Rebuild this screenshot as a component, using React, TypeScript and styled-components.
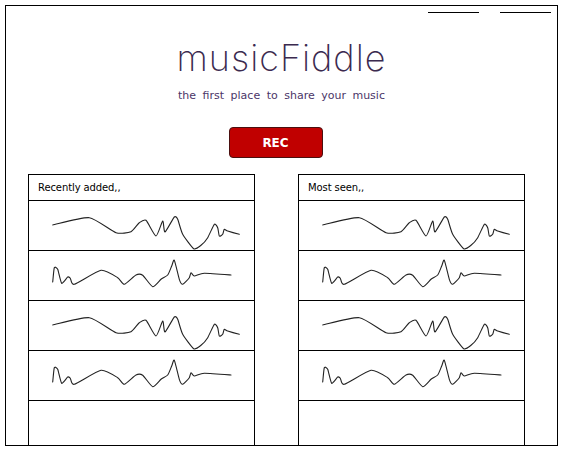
import React from "react";
import styled, { createGlobalStyle } from "styled-components";

const Global = createGlobalStyle`
  html, body { margin: 0; padding: 0; background: #fff; }
  body { font-family: "DejaVu Sans", "Noto Sans CJK KR", sans-serif; }
`;

const Frame = styled.div`
  box-sizing: border-box;
  margin: 5px 0 0 5px;
  width: 553px;
  height: 441px;
  border: 1px solid #000;
  display: flex;
  flex-direction: column;
  overflow: hidden;
`;

const Nav = styled.nav`
  display: flex;
  justify-content: flex-end;
  gap: 21px;
  padding: 6px 6px 0 0;
`;

const NavLink = styled.a`
  display: block;
  width: 51px;
  height: 0;
  border-bottom: 1px solid #000;
`;

const Title = styled.h1`
  margin: 25px 0 0 0;
  text-align: center;
  font-family: "Inter", "Noto Sans", sans-serif;
  font-weight: 200;
  font-size: 36px;
  letter-spacing: 1px;
  line-height: 40px;
  color: #3b2a4f;
`;

const Subtitle = styled.p`
  margin: 11px 0 0 0;
  text-align: center;
  font-family: "DejaVu Sans", sans-serif;
  font-size: 11px;
  word-spacing: 3px;
  letter-spacing: 0;
  color: #4b3668;
`;

const RecButton = styled.button`
  align-self: center;
  margin: 25px 12px 0 0;
  box-sizing: border-box;
  width: 94px;
  height: 31px;
  background: #c00000;
  border: 1px solid #4a1010;
  border-radius: 4px;
  color: #fff;
  font-family: "DejaVu Sans", sans-serif;
  font-weight: bold;
  font-size: 12px;
  cursor: pointer;
`;

const Panels = styled.div`
  flex: 1;
  display: grid;
  grid-template-columns: 227px 227px;
  column-gap: 43px;
  padding-left: 22px;
  margin-top: 16px;
  min-height: 0;
`;

const Panel = styled.section`
  box-sizing: border-box;
  border: 1px solid #000;
  border-bottom: none;
  display: flex;
  flex-direction: column;
  overflow: hidden;
`;

const PanelHeader = styled.div`
  height: 25px;
  border-bottom: 1px solid #000;
  padding-left: 9px;
  display: flex;
  align-items: center;
  font-family: "DejaVu Sans", sans-serif;
  font-size: 10px;
  letter-spacing: -0.1px;
  color: #000;
  flex-shrink: 0;
`;

const Row = styled.div`
  height: 49px;
  border-bottom: 1px solid #000;
  flex-shrink: 0;
  &:last-child {
    border-bottom: none;
    flex: 1;
  }
`;

const Wave = styled.svg`
  display: block;
  width: 225px;
  height: 49px;
`;

type Pt = [number, number];

const waveA: Pt[] = [
  [23.7, 24], [60.3, 16.7], [87, 31.7], [102, 30.7], [110.3, 21.7], [117, 19.3],
  [127, 35], [133.7, 20], [136, 31], [145.3, 16], [148.7, 18.3], [153.7, 33.3],
  [164.7, 47.7], [172, 44.3], [178.7, 36.7], [185.3, 23.3], [188.7, 26.7],
  [190.3, 35], [193.7, 33.3], [195.3, 28.3], [198.7, 30], [210.3, 33.3],
];

const waveB: Pt[] = [
  [23.7, 31], [25.3, 16.7], [28.7, 18.3], [32.7, 32.3], [38.7, 26], [41.3, 27.3],
  [45.3, 33.3], [72, 19.3], [88.7, 26.7], [95.3, 33.3], [107, 24], [113.7, 24.3],
  [123.7, 35.7], [132, 28.3], [138.7, 24], [142.7, 15], [145.3, 9.3], [150.3, 28.3],
  [153.7, 33.3], [160.3, 26.7], [162, 21.7], [165.3, 25], [175.3, 22.3], [202, 24],
];

function smoothPath(pts: Pt[]): string {
  let d = `M${pts[0][0]},${pts[0][1]}`;
  for (let i = 0; i < pts.length - 1; i++) {
    const p0 = pts[i - 1] || pts[i];
    const p1 = pts[i];
    const p2 = pts[i + 1];
    const p3 = pts[i + 2] || p2;
    const t = 0.1;
    const c1x = p1[0] + (p2[0] - p0[0]) * t;
    const c1y = p1[1] + (p2[1] - p0[1]) * t;
    const c2x = p2[0] - (p3[0] - p1[0]) * t;
    const c2y = p2[1] - (p3[1] - p1[1]) * t;
    d += ` C${c1x.toFixed(1)},${c1y.toFixed(1)} ${c2x.toFixed(1)},${c2y.toFixed(1)} ${p2[0]},${p2[1]}`;
  }
  return d;
}

const Waveform: React.FC<{ pts: Pt[] }> = ({ pts }) => (
  <Wave viewBox="0 0 225 49">
    <path
      d={smoothPath(pts)}
      fill="none"
      stroke="#222"
      strokeWidth={1.1}
      strokeLinejoin="round"
      strokeLinecap="round"
    />
  </Wave>
);

const List: React.FC<{ title: string }> = ({ title }) => (
  <Panel>
    <PanelHeader>{title}</PanelHeader>
    <Row><Waveform pts={waveA} /></Row>
    <Row><Waveform pts={waveB} /></Row>
    <Row><Waveform pts={waveA} /></Row>
    <Row><Waveform pts={waveB} /></Row>
    <Row />
  </Panel>
);

export default function App() {
  return (
    <>
      <Global />
      <Frame>
        <Nav>
          <NavLink />
          <NavLink />
        </Nav>
        <Title>musicFiddle</Title>
        <Subtitle>the first place to share your music</Subtitle>
        <RecButton>REC</RecButton>
        <Panels>
          <List title="Recently added,," />
          <List title="Most seen,," />
        </Panels>
      </Frame>
    </>
  );
}
